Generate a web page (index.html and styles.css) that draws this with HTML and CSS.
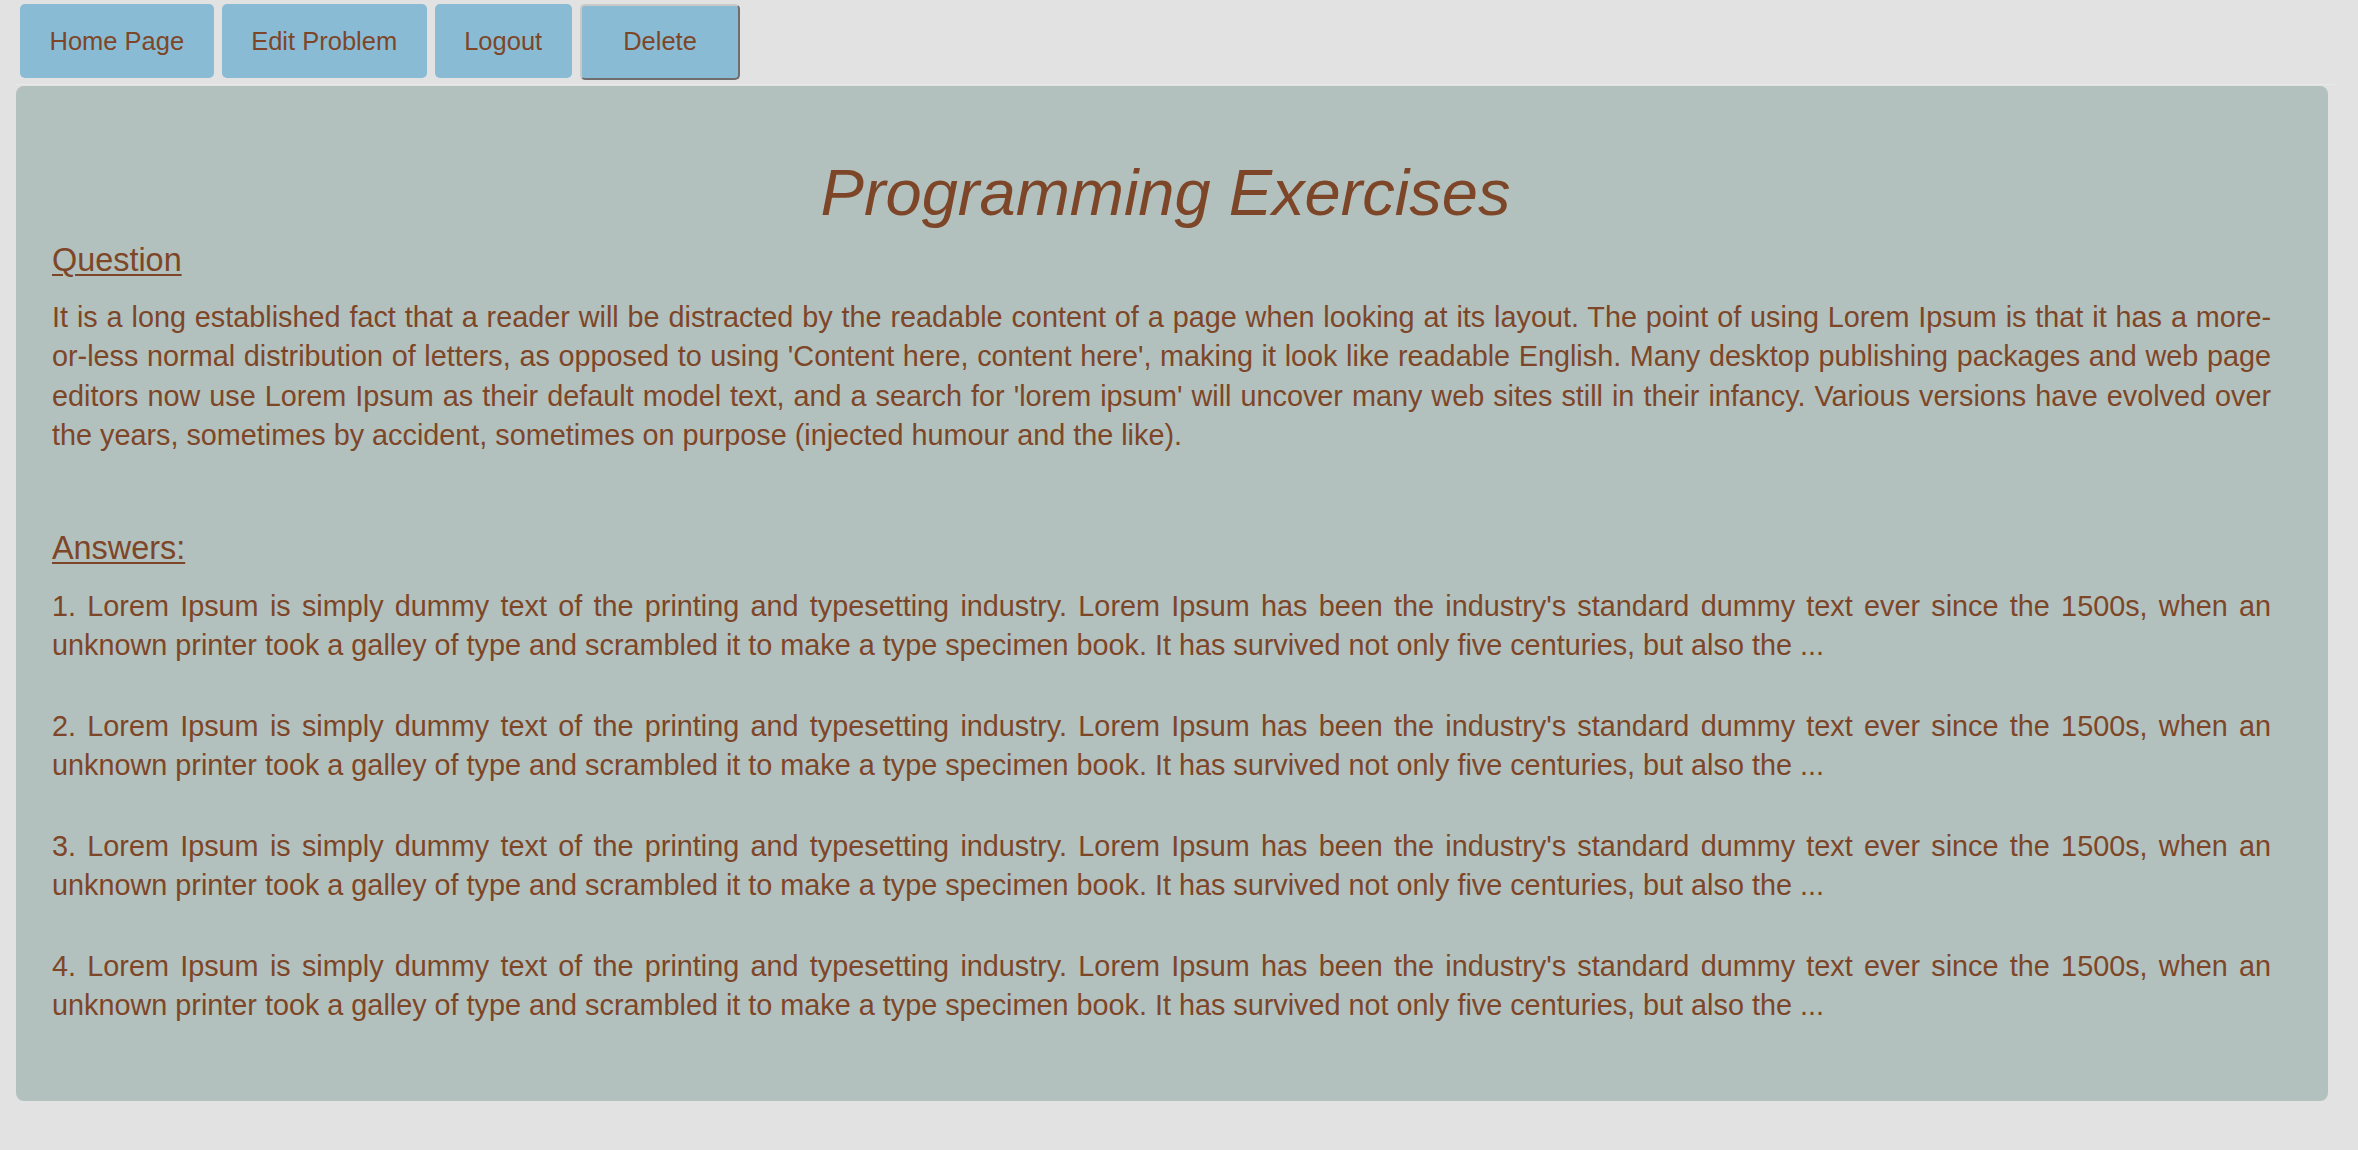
FILE: index.html
```html
<!DOCTYPE html>
<html lang="en">
<head>
<meta charset="utf-8">
<title>Programming Exercises</title>
<link rel="stylesheet" href="styles.css">
</head>
<body>
<nav class="nav">
  <a class="nav-btn" href="#">Home Page</a>
  <a class="nav-btn" href="#">Edit Problem</a>
  <a class="nav-btn" href="#">Logout</a>
  <button class="nav-btn delete-btn" type="button">Delete</button>
</nav>
<div class="wrap">
  <main class="panel">
    <h1 class="title">Programming Exercises</h1>
    <h2 class="section-head">Question</h2>
    <p class="question">It is a long established fact that a reader will be distracted by the readable content of a page when looking at its layout. The point of using Lorem Ipsum is that it has a more-or-less normal distribution of letters, as opposed to using 'Content here, content here', making it look like readable English. Many desktop publishing packages and web page editors now use Lorem Ipsum as their default model text, and a search for 'lorem ipsum' will uncover many web sites still in their infancy. Various versions have evolved over the years, sometimes by accident, sometimes on purpose (injected humour and the like).</p>
    <h2 class="section-head answers-head">Answers:</h2>
    <div class="answers">
      <p class="answer">1. Lorem Ipsum is simply dummy text of the printing and typesetting industry. Lorem Ipsum has been the industry's standard dummy text ever since the 1500s, when an unknown printer took a galley of type and scrambled it to make a type specimen book. It has survived not only five centuries, but also the ...</p>
      <p class="answer">2. Lorem Ipsum is simply dummy text of the printing and typesetting industry. Lorem Ipsum has been the industry's standard dummy text ever since the 1500s, when an unknown printer took a galley of type and scrambled it to make a type specimen book. It has survived not only five centuries, but also the ...</p>
      <p class="answer">3. Lorem Ipsum is simply dummy text of the printing and typesetting industry. Lorem Ipsum has been the industry's standard dummy text ever since the 1500s, when an unknown printer took a galley of type and scrambled it to make a type specimen book. It has survived not only five centuries, but also the ...</p>
      <p class="answer">4. Lorem Ipsum is simply dummy text of the printing and typesetting industry. Lorem Ipsum has been the industry's standard dummy text ever since the 1500s, when an unknown printer took a galley of type and scrambled it to make a type specimen book. It has survived not only five centuries, but also the ...</p>
    </div>
  </main>
</div>
</body>
</html>
```
FILE: styles.css
```css
html, body {
  margin: 0;
  padding: 0;
}

body {
  background: #e2e2e2;
  font-family: "Liberation Sans", Arial, Helvetica, sans-serif;
  color: #7e4628;
}

.nav {
  display: flex;
  align-items: flex-start;
  gap: 8px;
  padding: 4px 0 0 20px;
}

.nav-btn {
  display: block;
  background: #89bcd4;
  color: #7e4628;
  font-family: "Liberation Sans", Arial, Helvetica, sans-serif;
  font-size: 25.5px;
  line-height: 29px;
  padding: 22.5px 29.5px;
  border: none;
  border-radius: 5px;
  text-decoration: none;
  margin: 0;
}

.delete-btn {
  padding: 20.5px 41.5px 22px;
  border-style: solid;
  border-width: 2px;
  border-color: #c9c9c9 #6e6e6e #6e6e6e #c9c9c9;
  cursor: pointer;
}

.wrap {
  margin: 4px 22px 0 16px;
  border-top: 1px solid #e9e9e9;
  padding: 1px 8px 0 0;
}

.panel {
  display: block;
  background: #b2c1bd;
  border-radius: 8px;
  padding: 70.7px 57px 75.9px 36px;
}

.title {
  margin: 0;
  padding-left: 8px;
  font-size: 65px;
  line-height: 74px;
  font-style: italic;
  font-weight: normal;
  text-align: center;
}

.section-head {
  margin: 11.6px 0 0;
  font-size: 32.4px;
  line-height: 37px;
  font-weight: normal;
  text-decoration: underline;
  text-decoration-thickness: 2px;
  text-underline-offset: 3px;
}

.answers-head {
  margin-top: 74.9px;
}

.question {
  margin: 18.8px 0 0;
  font-size: 28.8px;
  line-height: 39.5px;
  text-align: justify;
}

.answers {
  margin-top: 19.1px;
  display: flex;
  flex-direction: column;
  gap: 41px;
}

.answer {
  margin: 0;
  font-size: 28.8px;
  line-height: 39.5px;
  text-align: justify;
}
```
